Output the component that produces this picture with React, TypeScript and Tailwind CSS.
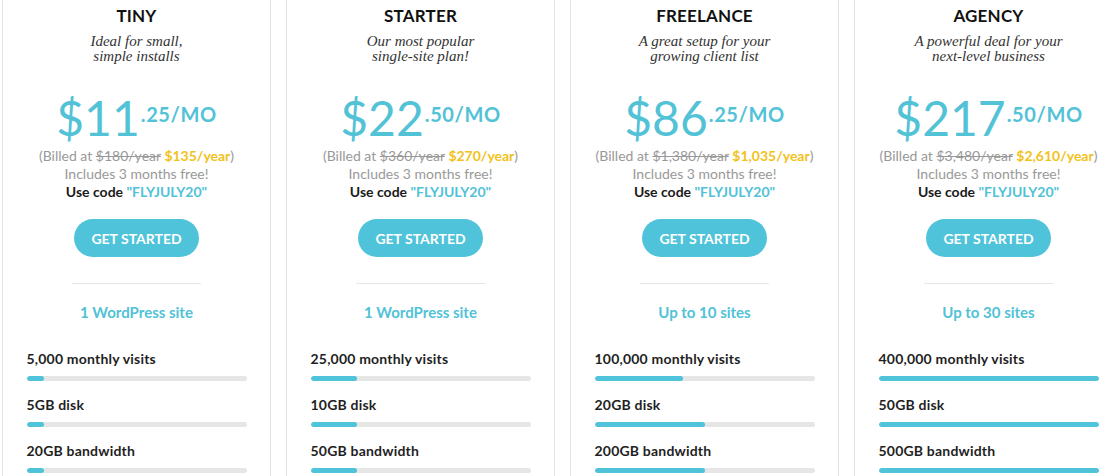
import React from "react";

type Plan = {
  name: string;
  sub: [string, string];
  dollars: string;
  cents: string;
  old: string;
  now: string;
  sites: string;
  features: { label: string; pct: number }[];
};

const plans: Plan[] = [
  {
    name: "TINY",
    sub: ["Ideal for small,", "simple installs"],
    dollars: "11",
    cents: "25",
    old: "$180/year",
    now: "$135/year",
    sites: "1 WordPress site",
    features: [
      { label: "5,000 monthly visits", pct: 8 },
      { label: "5GB disk", pct: 8 },
      { label: "20GB bandwidth", pct: 8 },
    ],
  },
  {
    name: "STARTER",
    sub: ["Our most popular", "single-site plan!"],
    dollars: "22",
    cents: "50",
    old: "$360/year",
    now: "$270/year",
    sites: "1 WordPress site",
    features: [
      { label: "25,000 monthly visits", pct: 21 },
      { label: "10GB disk", pct: 21 },
      { label: "50GB bandwidth", pct: 21 },
    ],
  },
  {
    name: "FREELANCE",
    sub: ["A great setup for your", "growing client list"],
    dollars: "86",
    cents: "25",
    old: "$1,380/year",
    now: "$1,035/year",
    sites: "Up to 10 sites",
    features: [
      { label: "100,000 monthly visits", pct: 40 },
      { label: "20GB disk", pct: 50 },
      { label: "200GB bandwidth", pct: 50 },
    ],
  },
  {
    name: "AGENCY",
    sub: ["A powerful deal for your", "next-level business"],
    dollars: "217",
    cents: "50",
    old: "$3,480/year",
    now: "$2,610/year",
    sites: "Up to 30 sites",
    features: [
      { label: "400,000 monthly visits", pct: 100 },
      { label: "50GB disk", pct: 100 },
      { label: "500GB bandwidth", pct: 100 },
    ],
  },
];

function Card({ p }: { p: Plan }) {
  return (
    <div className="w-[269px] shrink-0 border-x border-[#e3e3e3] flex flex-col items-center pt-[6px]">
      <div className="text-[17px] leading-[20px] font-bold text-[#111] tracking-[0.2px]">{p.name}</div>
      <div
        className="mt-[8px] text-[15px] leading-[15px] italic text-[#333] text-center"
        style={{ fontFamily: '"Liberation Serif", serif' }}
      >
        <div>{p.sub[0]}</div>
        <div>{p.sub[1]}</div>
      </div>
      <div className="mt-[30px] flex items-start text-[#52c2d7]">
        <span className="text-[48px] leading-[48px] font-normal">${p.dollars}</span>
        <span className="mt-[10px] ml-[1px] text-[20px] leading-[20px] font-bold tracking-[0.6px]">
          .{p.cents}/MO
        </span>
      </div>
      <div className="mt-[5px] text-[14px] leading-[18px] text-[#999] text-center">
        <div>
          (Billed at <span className="line-through">{p.old}</span>{" "}
          <span className="font-bold text-[#f2c21b]">{p.now}</span>)
        </div>
        <div>Includes 3 months free!</div>
        <div className="font-bold text-[#1a1a1a]">
          Use code <span className="text-[#52c2d7]">"FLYJULY20"</span>
        </div>
      </div>
      <button className="mt-[18px] w-[125px] h-[38px] rounded-full bg-[#4fc3d9] text-white text-[14px] font-bold">
        GET STARTED
      </button>
      <div className="mt-[26px] w-[129px] h-px bg-[#e6e6e6]" />
      <div className="mt-[18px] text-[15px] leading-[20px] font-bold text-[#52c2d7]">{p.sites}</div>
      <div className="mt-[27px] w-[220px] flex flex-col">
        {p.features.map((f, i) => (
          <div key={i} className={i === 0 ? "" : "mt-[14px]"}>
            <div className="text-[14px] leading-[20px] font-bold text-[#1f1f1f] tracking-[0.2px]">{f.label}</div>
            <div className="mt-[7px] h-[5px] rounded-full bg-[#e6e6e6] overflow-hidden">
              <div className="h-full rounded-full bg-[#4fc3d9]" style={{ width: `${f.pct}%` }} />
            </div>
          </div>
        ))}
      </div>
    </div>
  );
}

export default function App() {
  return (
    <div
      className="w-[1116px] h-[476px] overflow-hidden bg-white flex gap-[15px] pl-[2px]"
      style={{ fontFamily: 'Lato, "Open Sans", sans-serif' }}
    >
      {plans.map((p) => (
        <Card key={p.name} p={p} />
      ))}
    </div>
  );
}
